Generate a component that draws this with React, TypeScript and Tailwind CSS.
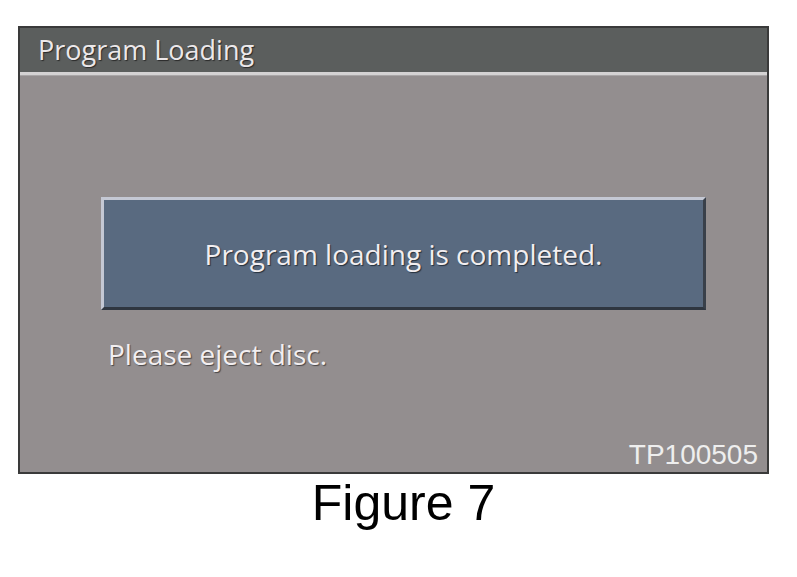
export default function App() {
  return (
    <div className="w-[797px] h-[577px] bg-white relative" style={{ fontFamily: '"Open Sans", "Noto Sans", sans-serif' }}>
      <div className="pt-[26px] pl-[18px]">
        <div className="w-[751px] h-[448px] border-2 border-[#3a3a3a] bg-[#938e8f] flex flex-col">
          <div className="h-[44px] bg-[#5b5e5d] flex items-center pl-[18px]">
            <span className="text-[27px] text-[#ece8ea] [text-shadow:1px_1px_1px_#2a2a2a] leading-none -mt-[2px]">Program Loading</span>
          </div>
          <div className="h-[4px] bg-[#d4d2d3] border-b border-[#a9a6a7]" />
          <div className="flex-1 flex flex-col relative">
            <div className="mt-[121px] ml-[81px] w-[605px] h-[113px] bg-[#596a80] border-t-[3px] border-l-[3px] border-t-[#c4c8d4] border-l-[#c4c8d4] border-r-[3px] border-b-[3px] border-r-[#39404a] border-b-[#2f3640] flex items-center justify-center">
              <span className="text-[28px] text-[#f2eef0] [text-shadow:1px_1px_1px_#26303c]">Program loading is completed.</span>
            </div>
            <div className="ml-[88px] mt-[30px] text-[28px] text-[#f2eef0] [text-shadow:1px_1px_1px_#4a4647] leading-none">Please eject disc.</div>
            <div className="absolute right-[9px] bottom-[3px] text-[28px] text-[#eeeeee] leading-none" style={{ fontFamily: '"Liberation Sans", Arial, sans-serif' }}>TP100505</div>
          </div>
        </div>
      </div>
      <div className="text-center pl-[10px] mt-[4px] text-[50px] leading-none text-black" style={{ fontFamily: '"Liberation Sans", Arial, sans-serif' }}>Figure 7</div>
    </div>
  );
}
